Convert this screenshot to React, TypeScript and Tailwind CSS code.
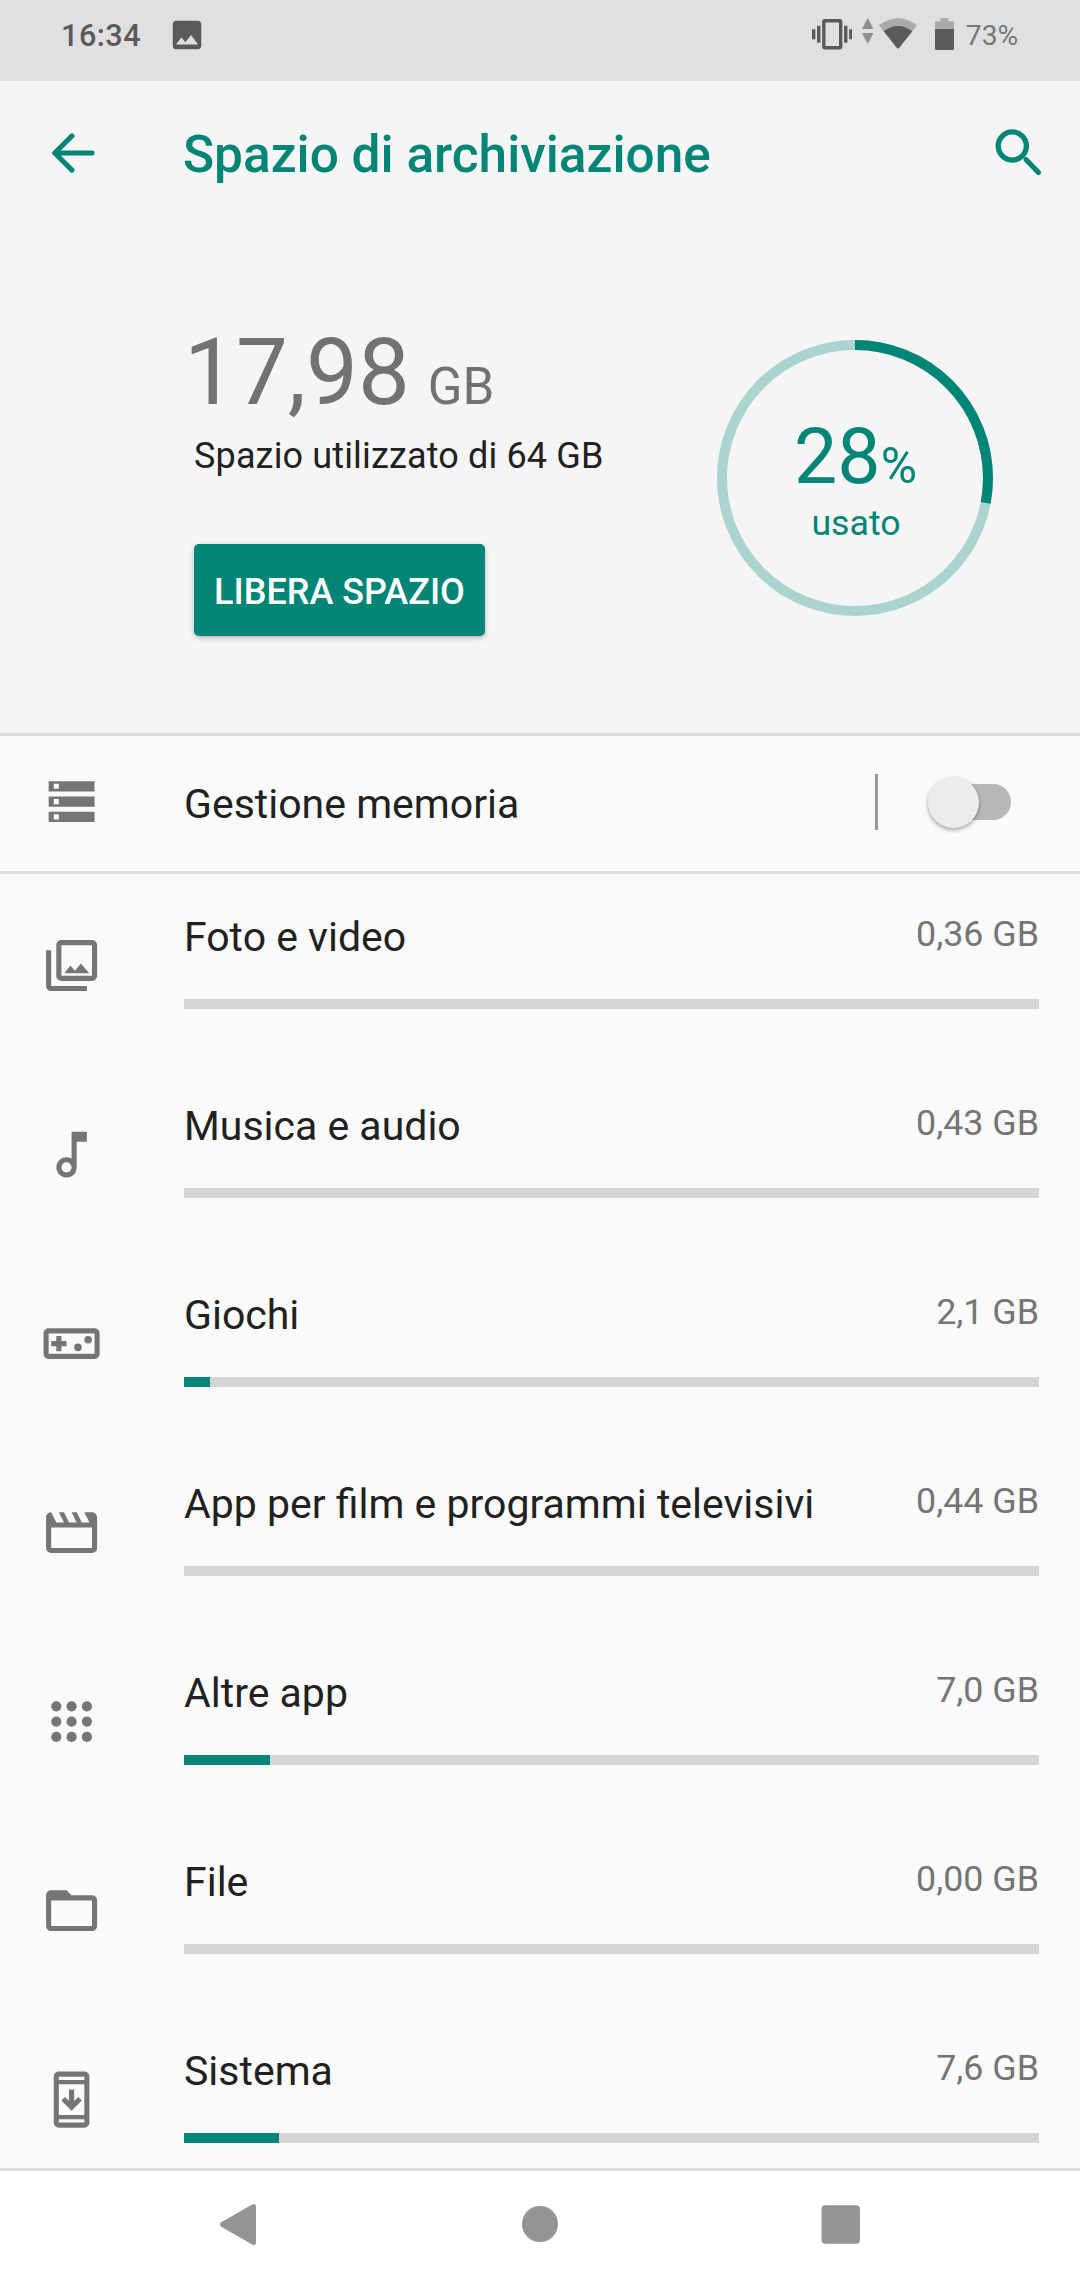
import type { ReactNode } from "react";

const categories = [
  { name: "Foto e video", size: "0,36 GB", used: 0, icon: <PhotoIcon /> },
  { name: "Musica e audio", size: "0,43 GB", used: 0, icon: <MusicIcon /> },
  { name: "Giochi", size: "2,1 GB", used: 26, icon: <GamesIcon /> },
  { name: "App per film e programmi televisivi", size: "0,44 GB", used: 0, icon: <MovieIcon /> },
  { name: "Altre app", size: "7,0 GB", used: 86, icon: <AppsIcon /> },
  { name: "File", size: "0,00 GB", used: 0, icon: <FolderIcon /> },
  { name: "Sistema", size: "7,6 GB", used: 95, icon: <SystemIcon /> },
];

// full width of a category bar, the "used" values above are in the same unit
const BAR_WIDTH = 855;

function Icon({ children }: { children: ReactNode }) {
  return (
    <svg viewBox="0 0 24 24" className="w-[61.2px] h-[61.2px] shrink-0 fill-[#757575]">
      {children}
    </svg>
  );
}

function StorageIcon() {
  return (
    <Icon>
      <path
        fillRule="evenodd"
        d="M3 20h18v-4H3v4zm2-3h2v2H5v-2zM3 4v4h18V4H3zm4 3H5V5h2v2zm-4 7h18v-4H3v4zm2-3h2v2H5v-2z"
      />
    </Icon>
  );
}

function PhotoIcon() {
  return (
    <Icon>
      <path
        fillRule="evenodd"
        d="M20 2H8c-1.1 0-2 .9-2 2v12c0 1.1.9 2 2 2h12c1.1 0 2-.9 2-2V4c0-1.1-.9-2-2-2zm0 14H8V4h12v12z"
      />
      <path d="M9.2 15l2.3-3 1.8 2 2.4-2.8 3.2 3.8zM2 6v14c0 1.1.9 2 2 2h14v-2H4V6H2z" />
    </Icon>
  );
}

function MusicIcon() {
  return (
    <Icon>
      <path
        fillRule="evenodd"
        d="M12 3v10.55A4 4 0 1 0 14 17V7h4V3h-6zm-2 16a2 2 0 1 1 0-4 2 2 0 0 1 0 4z"
      />
    </Icon>
  );
}

function GamesIcon() {
  return (
    <Icon>
      <path
        fillRule="evenodd"
        d="M21 6H3c-1.1 0-2 .9-2 2v8c0 1.1.9 2 2 2h18c1.1 0 2-.9 2-2V8c0-1.1-.9-2-2-2zm0 10H3V8h18v8z"
      />
      <path d="M6 15h2v-2h2v-2H8V9H6v2H4v2h2z" />
      <circle cx="14.5" cy="13.5" r="1.5" />
      <circle cx="18.5" cy="10.5" r="1.5" />
    </Icon>
  );
}

function MovieIcon() {
  return (
    <Icon>
      <path
        fillRule="evenodd"
        d="M4 4l2 4h3L7 4h2l2 4h3l-2-4h2l2 4h3l-2-4h3a2 2 0 0 1 2 2v12a2 2 0 0 1-2 2H4a2 2 0 0 1-2-2V6c0-1.1.9-2 2-2zm0 6v8h16v-8H4z"
      />
    </Icon>
  );
}

function AppsIcon() {
  return (
    <Icon>
      {[6, 12, 18].map((y) =>
        [6, 12, 18].map((x) => <circle key={`${x}-${y}`} cx={x} cy={y} r="2" />)
      )}
    </Icon>
  );
}

function FolderIcon() {
  return (
    <Icon>
      <path
        fillRule="evenodd"
        d="M10 4H4c-1.1 0-2 .9-2 2v12c0 1.1.9 2 2 2h16c1.1 0 2-.9 2-2V8c0-1.1-.9-2-2-2h-8l-2-2zM4 8h16v10H4V8z"
      />
    </Icon>
  );
}

function SystemIcon() {
  return (
    <Icon>
      <path
        fillRule="evenodd"
        d="M17 1H7c-1.1 0-2 .9-2 2v18c0 1.1.9 2 2 2h10c1.1 0 2-.9 2-2V3c0-1.1-.9-2-2-2zM7 3h10v1.3H7V3zm0 3h10v12H7V6zm0 13.7h10V21H7v-1.3z"
      />
      <path d="M16 12.4l-4 4-4-4L9.4 11l1.6 1.6V8h2v4.6l1.6-1.6z" />
    </Icon>
  );
}

function StatusBar() {
  return (
    <div className="h-[81px] shrink-0 bg-[#e0e0e0] flex items-start text-[#5a5a5a]">
      <span className="ml-[61px] mt-4 text-[30.6px] leading-10 font-medium tracking-[0.5px]">16:34</span>
      <svg viewBox="0 0 24 24" className="ml-[27px] mt-[15.5px] w-[38px] h-[38px] fill-current">
        <path d="M21 19V5c0-1.1-.9-2-2-2H5c-1.1 0-2 .9-2 2v14c0 1.1.9 2 2 2h14c1.1 0 2-.9 2-2zM8.5 13.5l2.5 3.01L14.5 12l4.5 6H5l3.5-4.5z" />
      </svg>
      <div className="ml-auto mr-[61.8px] flex items-start">
        <svg viewBox="0 0 24 24" className="mt-[13.8px] w-[40.5px] h-[40.5px] fill-current">
          <path
            fillRule="evenodd"
            d="M0 15h2V9H0v6zm3 2h2V7H3v10zm19-8v6h2V9h-2zm-3 8h2V7h-2v10zM16.5 3h-9C6.67 3 6 3.67 6 4.5v15c0 .83.67 1.5 1.5 1.5h9c.83 0 1.5-.67 1.5-1.5v-15c0-.83-.67-1.5-1.5-1.5zM16 19H8V5h8v14z"
          />
        </svg>
        <svg viewBox="0 0 12 26" className="ml-[9.5px] mt-[18px] w-3 h-[26px] fill-[#8f8f8f]">
          <path d="M0 11L5.7 0l5.7 11zM0 15h11.4L5.7 26z" />
        </svg>
        <svg viewBox="0 0 38 31" className="ml-[5.5px] mt-[18px] w-[38px] h-[31px]">
          <path d="M0 7.2Q19-6.6 38 7.2L33.2 13.4 19 30.6 4.8 13.4z" fill="#aaa" />
          <path d="M4.7 13.2Q19 2.6 33.3 13.2L20.3 29.8q-1.3 1.6-2.6 0z" fill="#5a5a5a" />
        </svg>
        <svg viewBox="0 0 19 32" className="ml-[17.5px] mt-[18px] w-[19px] h-8">
          <path d="M5.5 0h8v3.3h4q1.5 0 1.5 1.5V11H0V4.8q0-1.5 1.5-1.5h4z" fill="#aaa" />
          <path d="M0 11h19v19.5q0 1.5-1.5 1.5h-16Q0 32 0 30.5z" fill="#5a5a5a" />
        </svg>
        <span className="ml-3 mt-4 text-[28.2px] leading-10 text-[#777]">73%</span>
      </div>
    </div>
  );
}

function Toolbar() {
  return (
    <header className="h-[143px] flex items-center text-[#008577]">
      <svg viewBox="0 0 44 40" className="ml-[50.5px] w-11 h-10 fill-none stroke-current stroke-5">
        <path d="M41 20H4M21 2.9L3.7 20 21 37.1" strokeLinecap="round" strokeLinejoin="round" />
      </svg>
      <h1 className="ml-[88.5px] mt-1 text-[51.4px] leading-[60px] font-medium">Spazio di archiviazione</h1>
      <svg viewBox="0 0 48 48" className="ml-auto mr-[37px] w-12 h-12 fill-none stroke-current">
        <circle cx="17.3" cy="17" r="14.1" strokeWidth="5.3" />
        <path d="M31 30.5L43.5 43.5" strokeWidth="5.2" strokeLinecap="round" />
      </svg>
    </header>
  );
}

function UsageRing({ percent }: { percent: number }) {
  return (
    <div className="relative w-[276px] h-[276px] text-[#008577]">
      <svg viewBox="0 0 276 276" className="w-full h-full -rotate-90 fill-none stroke-10">
        <circle cx="138" cy="138" r="133" stroke="#abd3cf" />
        <circle cx="138" cy="138" r="133" stroke="#008577" pathLength="100" strokeDasharray={`${percent} 100`} />
      </svg>
      <div className="absolute inset-0 pt-[72px] flex flex-col items-center">
        <div className="h-[90px] ml-px text-[77px] leading-[90px] whitespace-nowrap">
          {percent}
          <span className="text-[49.5px] leading-none">%</span>
        </div>
        <div className="text-[35.7px] leading-[42px] ml-[2px]">usato</div>
      </div>
    </div>
  );
}

function CategoryRow({ name, size, used, icon }: (typeof categories)[number]) {
  return (
    <li className="h-[189px] shrink-0 flex pl-[41px] pr-[41px]">
      <div className="pt-[61px] w-[143px]">{icon}</div>
      <div className="flex-1">
        <div className="h-[125px] pt-[37px] flex justify-between">
          <span className="mt-[2px] text-[41px] leading-12">{name}</span>
          <span className="text-[35.8px] leading-[46px] text-[#757575]">{size}</span>
        </div>
        <div className="h-[10px] bg-[#d6d6d6]">
          <div className="h-full bg-[#008577]" style={{ width: `${(used / BAR_WIDTH) * 100}%` }} />
        </div>
      </div>
    </li>
  );
}

export default function App() {
  return (
    <div className="w-[1080px] h-[2280px] overflow-hidden flex flex-col bg-[#fafafa] text-[#212121] font-[Roboto,sans-serif]">
      <StatusBar />

      <div className="h-[655px] shrink-0 bg-[#f5f5f5] border-b-3 border-[#dcdcdc]">
        <Toolbar />
        <div className="flex justify-between pl-[184px] pr-[87px]">
          <div className="pt-[95px]">
            <div className="h-[108px] text-[92.4px] leading-[108px] text-[#727272] whitespace-nowrap">
              17,98 <span className="-ml-[5px] text-[51px] leading-none">GB</span>
            </div>
            <p className="ml-[10px] mt-2 text-[36px] leading-[42px] tracking-[0.15px]">Spazio utilizzato di 64 GB</p>
            <button className="ml-[10px] mt-[67px] w-[291px] h-[92px] pt-1 rounded-[5px] bg-[#008577] text-white text-[36px] font-medium shadow-[0_2px_5px_rgba(0,0,0,0.25)]">
              LIBERA SPAZIO
            </button>
          </div>
          <div className="pt-[116px]">
            <UsageRing percent={28} />
          </div>
        </div>
      </div>

      <div className="h-[138px] shrink-0 flex items-center border-b-3 border-[#dcdcdc] pl-[41px]">
        <div className="w-[143px] pb-1">
          <StorageIcon />
        </div>
        <span className="text-[41px] leading-12">Gestione memoria</span>
        <div className="ml-auto mb-[3px] w-[3px] h-14 bg-[#999]" />
        <button className="relative mb-[3px] ml-[57px] mr-[69px] w-[76px] h-9 rounded-full bg-[#b8b8b8]">
          <span className="absolute -left-[7.5px] -top-[7.5px] w-[51.5px] h-[51.5px] rounded-full bg-[#ececec] shadow-[0_2px_4px_rgba(0,0,0,0.35)]" />
        </button>
      </div>

      <ul className="flex-1 min-h-0 overflow-hidden flex flex-col">
        {categories.map((category) => (
          <CategoryRow key={category.name} {...category} />
        ))}
      </ul>

      <nav className="h-28 shrink-0 border-t-3 border-[#dcdcdc] bg-white">
        <svg viewBox="0 0 1080 109" className="w-full h-full fill-[#949494]">
          <path d="M221.2 51.3L252.2 33.4Q256 31.8 256 36V71Q256 75.2 252.2 73.6L221.2 55.7Q219 53.5 221.2 51.3z" />
          <circle cx="540" cy="53" r="18" />
          <rect x="821.5" y="34.3" width="38.5" height="38.5" rx="4" />
        </svg>
      </nav>
    </div>
  );
}
